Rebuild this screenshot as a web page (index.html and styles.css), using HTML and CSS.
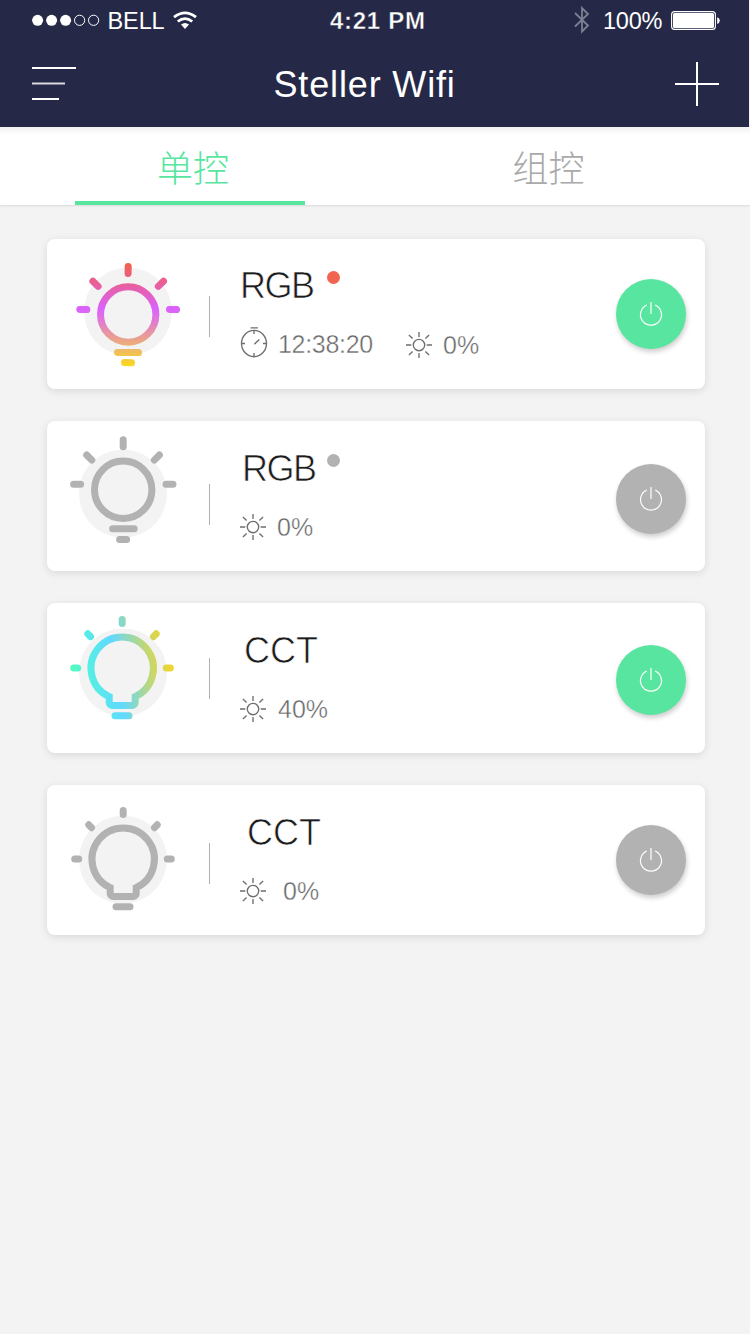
FILE: index.html
```html
<!DOCTYPE html>
<html lang="zh-CN">
<head>
<meta charset="utf-8">
<title>Steller Wifi</title>
<link rel="stylesheet" href="styles.css">
</head>
<body>
<svg class="defs" width="0" height="0" aria-hidden="true">
  <defs>
    <linearGradient id="rgb" gradientUnits="userSpaceOnUse" x1="81" y1="24" x2="81" y2="127">
      <stop offset="0" stop-color="#f26048"/>
      <stop offset=".45" stop-color="#db61ff"/>
      <stop offset=".86" stop-color="#f0bd5c"/>
      <stop offset="1" stop-color="#fbd91b"/>
    </linearGradient>
    <linearGradient id="cct" gradientUnits="userSpaceOnUse" x1="23" y1="72" x2="127" y2="55">
      <stop offset="0" stop-color="#53ffb2"/>
      <stop offset=".16" stop-color="#55f0e0"/>
      <stop offset=".44" stop-color="#61d9ff"/>
      <stop offset=".78" stop-color="#c9d76a"/>
      <stop offset="1" stop-color="#f7d420"/>
    </linearGradient>
    <symbol id="sun" viewBox="0 0 28 28">
      <circle cx="14" cy="14" r="5.7"/>
      <path d="M14 1v5M14 22v5M1 14h5.3M21.7 14H27M3.9 3.9l3.7 3.7M20.4 20.4l3.7 3.7M3.9 24.1l3.7-3.7M20.4 7.6l3.7-3.7"/>
    </symbol>
    <symbol id="power" viewBox="0 0 28 28">
      <path d="M9.8 5A10.5 10.5 0 1 0 18.2 5"/>
      <path class="power-tick" d="M14 2v12"/>
    </symbol>
    <symbol id="bulb-open" viewBox="0 0 162 150">
      <path d="M75.2 16.5v4M26.7 65h4M119.3 65h4M40.8 30.8l2.7 2.9M109.2 30.8l-2.7 2.9M68 112.7h14"/>
      <path d="M62.2 93.6A31.2 31.2 0 1 1 88.2 93.6V99.5a3 3 0 0 1-3 3H65.2a3 3 0 0 1-3-3Z"/>
    </symbol>
  </defs>
</svg>

<header class="header">
  <div class="status">
    <svg class="signal" width="68" height="12" viewBox="0 0 68 12">
      <g fill="#fff"><circle cx="5.6" cy="6.3" r="5.5"/><circle cx="19.6" cy="6.3" r="5.5"/><circle cx="33.6" cy="6.3" r="5.5"/></g>
      <g fill="none" stroke="#fff"><circle cx="47.6" cy="6.3" r="5.1"/><circle cx="61.6" cy="6.3" r="5.1"/></g>
    </svg>
    <span class="carrier">BELL</span>
    <svg class="wifi" width="24" height="19" viewBox="0 0 24 19">
      <g fill="none" stroke="#fff" stroke-width="2.8"><path d="M1 6.1Q12 -2.3 23 6.1"/><path d="M4.8 10.5Q12 4.7 19.2 10.5"/></g>
      <path d="M8 13.6Q12 10.5 16 13.6L12 18Z" fill="#fff"/>
    </svg>
    <span class="clock">4:21 PM</span>
    <svg class="bluetooth" width="16" height="28" viewBox="0 0 16 28">
      <path d="M1 7l13 12.5-6 6V2l6 6L1 20.5" fill="none" stroke="#7d8093" stroke-width="1.8"/>
    </svg>
    <span class="percent">100%</span>
    <svg class="battery" width="50" height="20" viewBox="0 0 50 20">
      <rect x=".6" y=".6" width="43.8" height="17.8" rx="3" fill="none" stroke="#fff" stroke-width="1.1"/>
      <rect x="2" y="2" width="41" height="15" rx="1.5" fill="#fff"/>
      <path d="M46.2 6.2q2.6.8 2.6 3.4t-2.6 3.4z" fill="#fff"/>
    </svg>
  </div>
  <div class="navbar">
    <svg class="menu" width="46" height="36" viewBox="0 0 46 36">
      <path d="M0 2h44M0 33h27" stroke="#fff" stroke-width="2"/><path d="M0 17.5h33" stroke="#d8dade" stroke-width="2.2"/>
    </svg>
    <h1 class="title">Steller Wifi</h1>
    <svg class="add" width="44" height="44" viewBox="0 0 44 44"><path d="M22 0v44M0 22h44" stroke="#fff" stroke-width="2"/></svg>
  </div>
</header>

<nav class="tabs">
  <a class="tab tab-active">单控</a>
  <a class="tab">组控</a>
</nav>

<main class="list">
  <section class="card">
    <svg class="bulb" viewBox="0 0 162 150">
      <circle cx="81" cy="72.6" r="44" fill="#f3f3f3"/>
      <g stroke="url(#rgb)">
        <circle cx="81.2" cy="75.5" r="27.7"/>
        <path d="M81.2 27.5L81.1 34.5M32.8 70.4L39.8 70.6M122.5 70.4L129.5 70.6M45.9 42.2l5.2 5.2M116.5 42.2l-5.2 5.2M70.5 113.4L91.5 113.6M77.5 123.6L84.5 123.8"/>
      </g>
    </svg>
    <i class="divider divider-1"></i>
    <div class="info info-1">
      <div class="name-row"><h2 class="name name-1">RGB</h2><i class="dot dot-on"></i></div>
      <div class="meta">
        <svg class="icon timer" viewBox="0 0 28 32"><ellipse cx="14" cy="17.5" rx="12.5" ry="13.2"/><path d="M10.5 1.8h7.4M14 4.5v3.5M14 27v3.5M1.5 17.5H5M23 17.5h3.5M14.3 18.2l5-4.8"/></svg>
        <span class="value time">12:38:20</span>
        <svg class="icon"><use href="#sun"/></svg>
        <span class="value">0%</span>
      </div>
    </div>
    <button class="power power-1 on"><svg><use href="#power"/></svg></button>
  </section>

  <section class="card">
    <svg class="bulb" viewBox="0 0 162 150">
      <circle cx="76" cy="72.7" r="44" fill="#f3f3f3"/>
      <g stroke="#b2b2b2">
        <circle cx="76.2" cy="68.7" r="28.7"/>
        <path d="M76.2 18.7v7M26.6 63.3h7M119 63.3h7M39.7 34l5.1 5.1M112.4 34l-5.1 5.1M65.6 107.7h21.6M72.6 118.5h7"/>
      </g>
    </svg>
    <i class="divider divider-2"></i>
    <div class="info">
      <div class="name-row"><h2 class="name name-2">RGB</h2><i class="dot"></i></div>
      <div class="meta"><svg class="icon"><use href="#sun"/></svg><span class="value">0%</span></div>
    </div>
    <button class="power power-2"><svg><use href="#power"/></svg></button>
  </section>

  <section class="card">
    <svg class="bulb" viewBox="0 0 162 150">
      <circle cx="76" cy="69.5" r="44" fill="#f3f3f3"/>
      <g stroke="url(#cct)">
        <path d="M75.2 16.5v4M26.7 65h4M119.3 65h4M40.8 30.8l2.7 2.9M109.2 30.8l-2.7 2.9M68 112.7h14"/>
        <path d="M62.2 93.6A31.2 31.2 0 1 1 88.2 93.6V99.5a3 3 0 0 1-3 3H65.2a3 3 0 0 1-3-3Z"/>
      </g>
    </svg>
    <i class="divider divider-3"></i>
    <div class="info">
      <div class="name-row"><h2 class="name name-3">CCT</h2></div>
      <div class="meta"><svg class="icon"><use href="#sun"/></svg><span class="value value-mid">40%</span></div>
    </div>
    <button class="power power-3 on"><svg><use href="#power"/></svg></button>
  </section>

  <section class="card">
    <svg class="bulb" viewBox="0 0 162 150">
      <circle cx="76" cy="74.7" r="44" fill="#f3f3f3"/>
      <use href="#bulb-open" x="1" y="9" width="162" height="150" stroke="#b2b2b2"/>
    </svg>
    <i class="divider divider-4"></i>
    <div class="info">
      <div class="name-row"><h2 class="name name-4">CCT</h2></div>
      <div class="meta"><svg class="icon"><use href="#sun"/></svg><span class="value value-wide">0%</span></div>
    </div>
    <button class="power power-4"><svg><use href="#power"/></svg></button>
  </section>
</main>
</body>
</html>
```

FILE: styles.css
```css
* { box-sizing: border-box; }

body {
  margin: 0;
  min-height: 1334px;
  background: #f3f3f3;
  font-family: "Liberation Sans", "Noto Sans CJK SC", sans-serif;
}

svg { display: block; flex: none; }
.defs { position: absolute; }

.header {
  width: 749px;
  height: 127px;
  background: #252947;
  color: #fff;
}

.status {
  display: flex;
  align-items: flex-start;
  height: 40px;
  padding-left: 32px;
  font-size: 23.5px;
  line-height: 26px;
  white-space: nowrap;
}
.signal { margin-top: 14px; }
.carrier { width: 73px; margin-top: 8px; padding-left: 7.5px; letter-spacing: -.1px; }
.wifi { margin-top: 11px; }
.clock {
  width: 237px;
  margin-top: 8px;
  padding-left: 133px;
  font-weight: 700;
  font-size: 24px;
  letter-spacing: .7px;
  -webkit-text-stroke: .4px #252947;
}
.bluetooth { margin: 6px 0 0 140px; }
.percent { width: 65px; margin-top: 8px; padding-left: 13px; letter-spacing: -.2px; }
.battery { margin: 11px 0 0 16px; }

.navbar {
  display: flex;
  align-items: flex-start;
  height: 87px;
  padding: 0 30px 0 32px;
}
.menu { margin-top: 26px; }
.title {
  width: 402px;
  margin: 25px 0 0 195.5px;
  font-size: 36px;
  font-weight: 400;
  line-height: 40px;
  letter-spacing: .85px;
}
.add { margin-top: 22px; }

.tabs {
  display: flex;
  height: 78px;
  padding: 0 75px;
  justify-content: space-between;
  background: linear-gradient(#f2f2f2, #fff 8px);
  box-shadow: 0 1px 2px rgba(0, 0, 0, .1);
}
.tab {
  width: 230px;
  height: 78px;
  padding-left: 6px;
  font: 300 36px/78px "Noto Sans CJK SC", sans-serif;
  text-align: center;
  color: #a9a9a9;
}
.tab:last-child { margin-right: 15px; padding-left: 7px; }
.tab-active { color: #57e59f; border-bottom: 4px solid #57e59f; }

.list {
  display: grid;
  gap: 32px;
  padding: 34px 45px 0 47px;
}
.card {
  display: flex;
  align-items: flex-start;
  height: 150px;
  border-radius: 8px;
  background: #fff;
  box-shadow: 0 2px 8px rgba(0, 0, 0, .11);
}
.bulb {
  width: 162px;
  height: 150px;
  fill: none;
  stroke-width: 7;
  stroke-linecap: round;
}

.divider { flex: none; width: 1px; height: 41px; background: #b0b0b0; }
.divider-1 { margin-top: 57px; }
.divider-2 { margin-top: 63px; }
.divider-3 { margin-top: 55px; }
.divider-4 { margin-top: 58px; }

.info { width: 406px; padding: 28px 0 0 29px; }
.info-1 { padding-top: 27px; }
.name-row { display: grid; grid-template-columns: 88px 13px; height: 40px; }
.name {
  margin: 0;
  font-size: 36px;
  font-weight: 400;
  line-height: 40px;
  letter-spacing: -1.5px;
  color: #1c1c1c;
  -webkit-text-stroke: .7px #fff;
}
.name-1 { padding-left: 1px; }
.name-2 { padding-left: 3px; }
.name-3 { padding-left: 5px; letter-spacing: 0; }
.name-4 { padding-left: 8px; letter-spacing: 0; }
.dot { width: 13px; height: 13px; margin-top: 5px; border-radius: 50%; background: #b2b2b2; }
.dot-on { background: #f06450; }

.meta { display: flex; align-items: flex-start; margin-top: 24px; }
.info-1 .meta { margin-top: 25px; }
.icon { width: 28px; height: 28px; fill: none; stroke: #6e6e6e; stroke-width: 1.35; }
.timer { height: 32px; margin: -5px 0 0 1px; }
.value {
  margin: -1px 0 0 10px;
  font-size: 25px;
  line-height: 30px;
  color: #666;
  -webkit-text-stroke: .4px #fff;
}
.time { width: 127px; margin-top: -2px; letter-spacing: -.3px; }
.value-mid { margin-left: 11px; }
.value-wide { margin-left: 16px; }

.power {
  display: grid;
  place-items: center;
  width: 70px;
  height: 70px;
  padding: 0;
  border: 0;
  border-radius: 50%;
  background: #b2b2b2;
  box-shadow: 1px 3px 5px rgba(0, 0, 0, .2);
}
.power svg { width: 28px; height: 28px; fill: none; stroke: #fff; stroke-width: 1.2; }
.power-tick { stroke-opacity: .75; stroke-width: 1.6; }
.on { background: #57e59f; }
.power-1, .power-4 { margin-top: 40px; }
.power-2 { margin-top: 43px; }
.power-3 { margin-top: 42px; }
```
